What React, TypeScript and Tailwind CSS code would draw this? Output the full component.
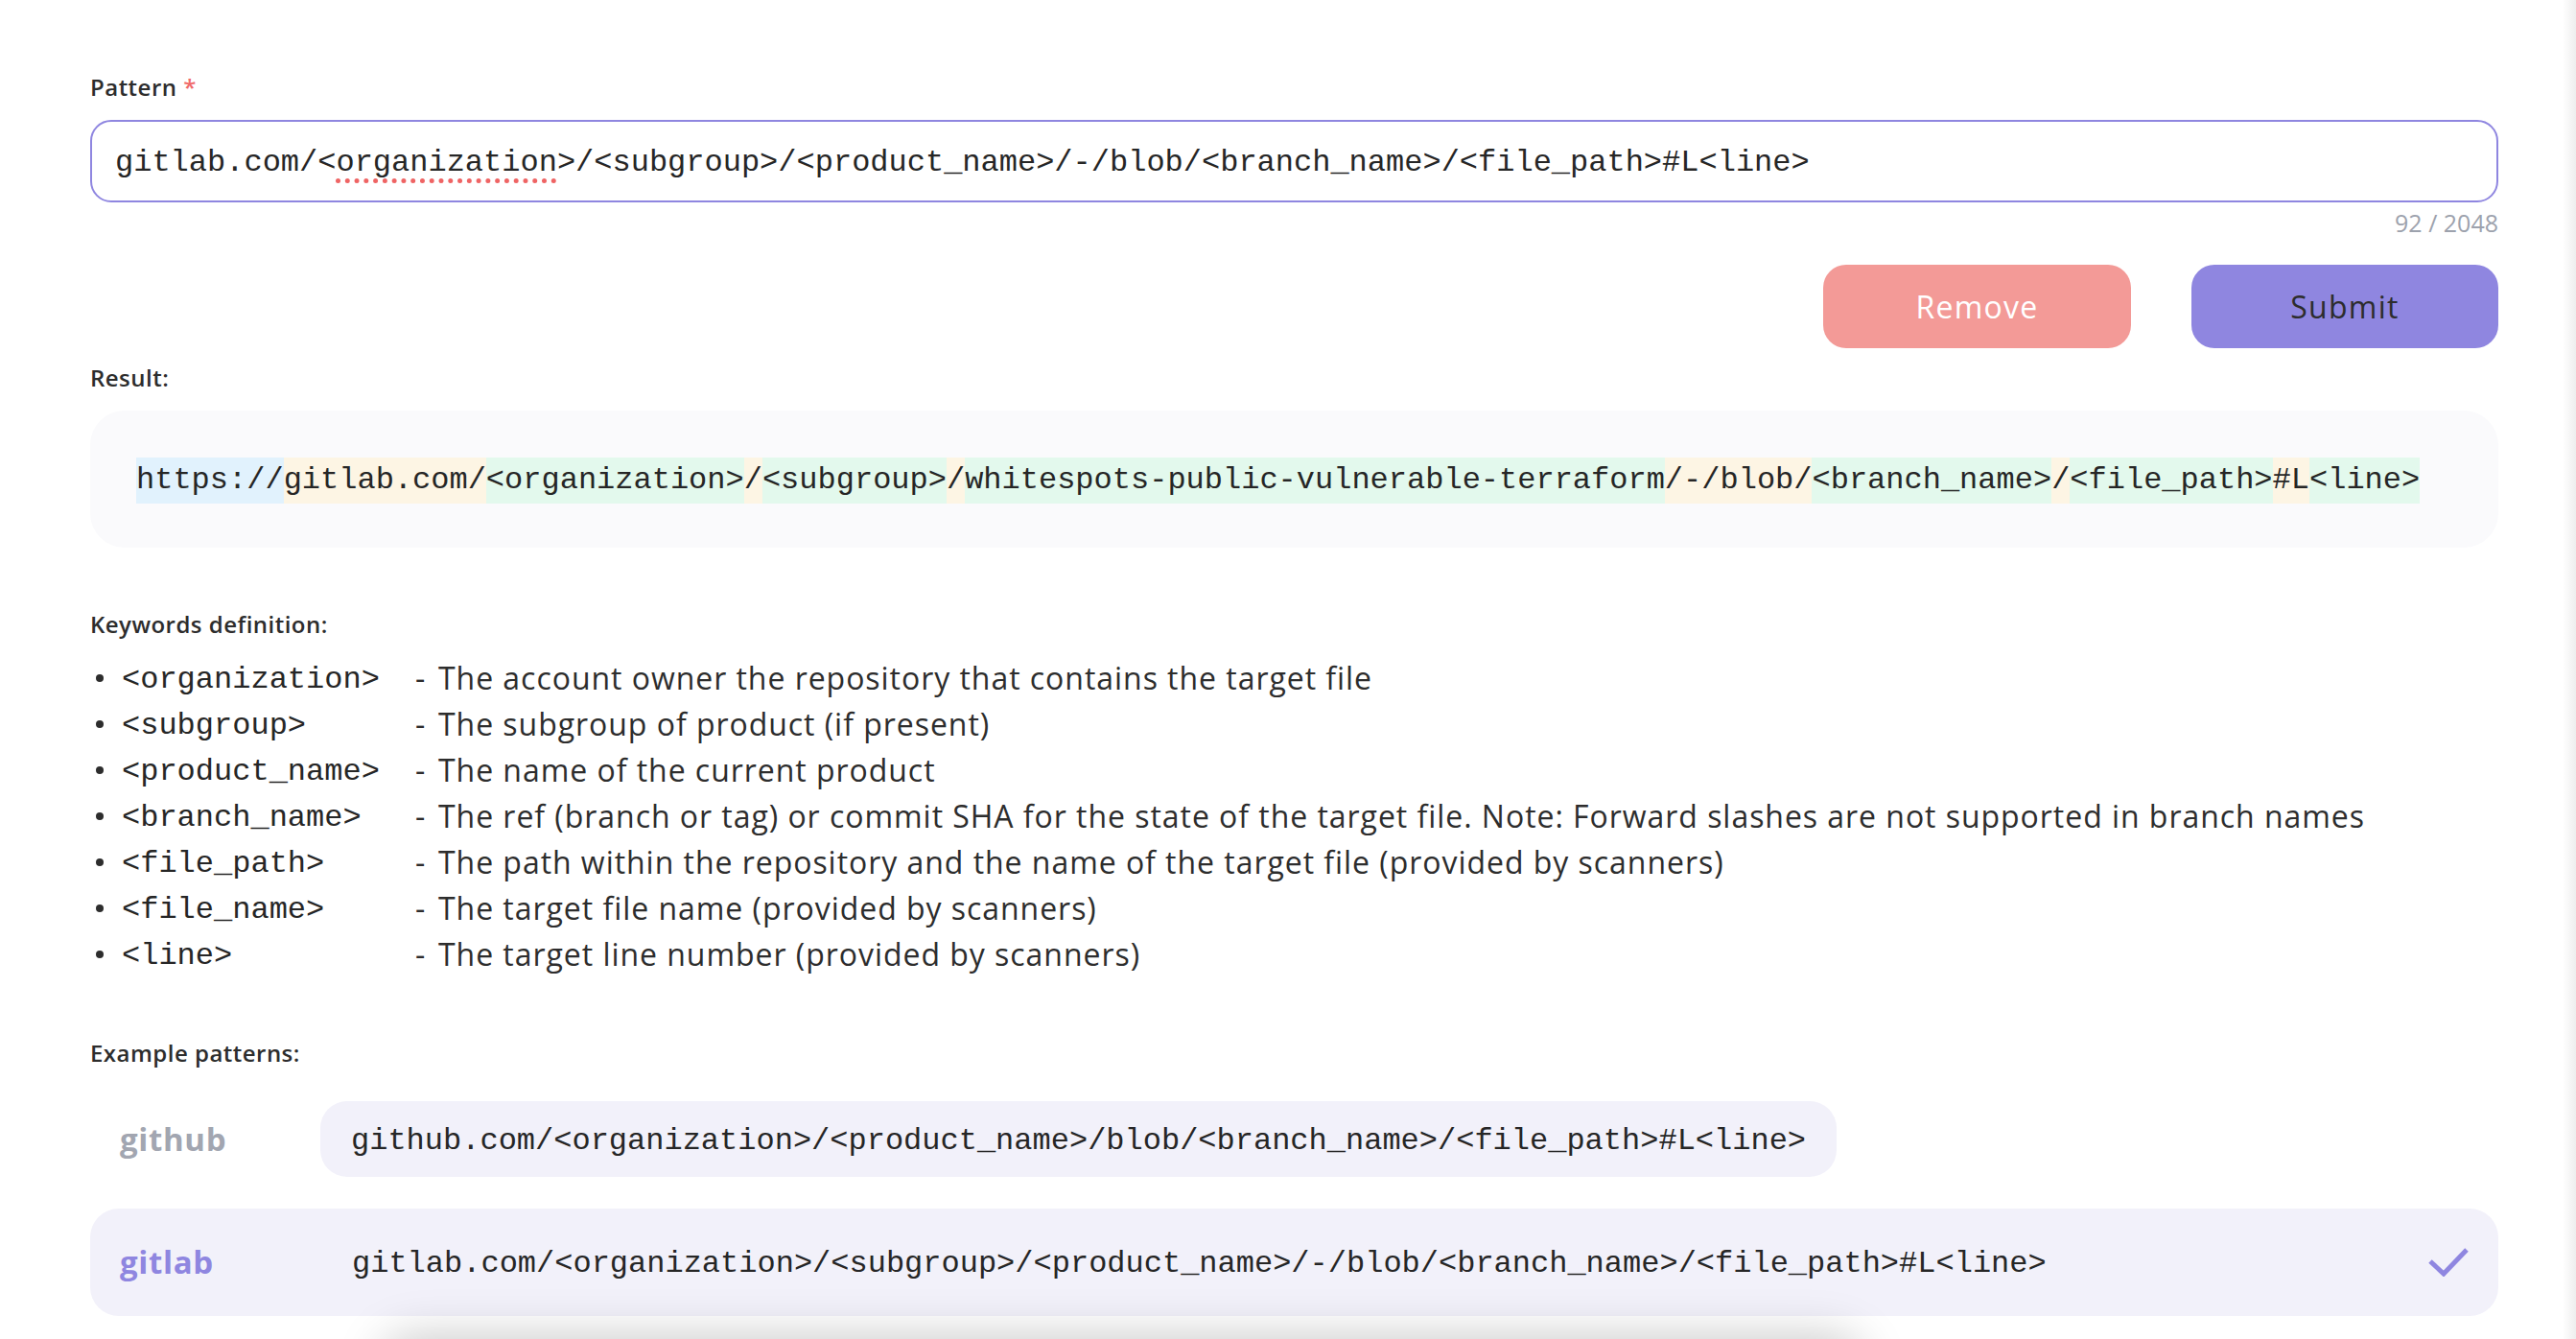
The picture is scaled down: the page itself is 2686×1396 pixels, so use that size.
import React from 'react';

type Seg = { text: string; kind: 'scheme' | 'static' | 'var' };

const resultSegs: Seg[] = [
  { text: 'https://', kind: 'scheme' },
  { text: 'gitlab.com/', kind: 'static' },
  { text: '<organization>', kind: 'var' },
  { text: '/', kind: 'static' },
  { text: '<subgroup>', kind: 'var' },
  { text: '/', kind: 'static' },
  { text: 'whitespots-public-vulnerable-terraform', kind: 'var' },
  { text: '/-/blob/', kind: 'static' },
  { text: '<branch_name>', kind: 'var' },
  { text: '/', kind: 'static' },
  { text: '<file_path>', kind: 'var' },
  { text: '#L', kind: 'static' },
  { text: '<line>', kind: 'var' },
];

const segBg: Record<Seg['kind'], string> = {
  scheme: 'bg-[#e1f2fd]',
  static: 'bg-[#fdf5e4]',
  var: 'bg-[#e3f9ed]',
};

const keywords = [
  ['<organization>', 'The account owner the repository that contains the target file'],
  ['<subgroup>', 'The subgroup of product (if present)'],
  ['<product_name>', 'The name of the current product'],
  ['<branch_name>', 'The ref (branch or tag) or commit SHA for the state of the target file. Note: Forward slashes are not supported in branch names'],
  ['<file_path>', 'The path within the repository and the name of the target file (provided by scanners)'],
  ['<file_name>', 'The target file name (provided by scanners)'],
  ['<line>', 'The target line number (provided by scanners)'],
];

const mono = "font-['Liberation_Mono','DejaVu_Sans_Mono',monospace] text-[#262626]";

function SectionLabel({ children, className = '' }: { children: React.ReactNode; className?: string }) {
  return (
    <div className={`text-[24px] leading-[32px] font-semibold tracking-[0.02em] text-[#2d2d2d] ${className}`}>
      {children}
    </div>
  );
}

export default function App() {
  return (
    <div className="relative h-[1396px] w-full overflow-hidden bg-white flex font-['Open_Sans',sans-serif] text-[#2d2d2d]">
      <main className="flex-1 pl-[94px] pr-[67px] pt-[75px]">
        <SectionLabel>
          Pattern <span className="text-[#f06a6a]">*</span>
        </SectionLabel>
        <div className="mt-[18px] h-[86px] rounded-[22px] border-2 border-[#8f86e0] flex items-center pl-[24px] pt-[4px]">
          <span className={`${mono} text-[32px]`}>
            gitlab.com/&lt;
            <span className="underline decoration-dotted decoration-[#ef6464] decoration-[5px] underline-offset-[8px]">organization</span>
            &gt;/&lt;subgroup&gt;/&lt;product_name&gt;/-/blob/&lt;branch_name&gt;/&lt;file_path&gt;#L&lt;line&gt;
          </span>
        </div>
        <div className="mt-[5px] text-right text-[25px] leading-[32px] text-[#9da2ad]">92 / 2048</div>

        <div className="mt-[28px] flex justify-end gap-[63px]">
          <button className="w-[321px] h-[87px] rounded-[24px] bg-[#f39a97] text-white text-[32px] font-medium tracking-[0.04em]">
            Remove
          </button>
          <button className="w-[320px] h-[87px] rounded-[24px] bg-[#8f86e0] text-[#2d2d2d] text-[32px] font-medium tracking-[0.04em]">
            Submit
          </button>
        </div>

        <SectionLabel className="mt-[15px]">Result:</SectionLabel>
        <div className="mt-[18px] h-[143px] rounded-[36px] bg-[#fafafc] flex items-center pl-[48px] pt-[2px]">
          <div className={`${mono} text-[32px] leading-[48px] flex`}>
            {resultSegs.map((s, i) => (
              <span key={i} className={`whitespace-pre ${segBg[s.kind]}`}>
                {s.text}
              </span>
            ))}
          </div>
        </div>

        <SectionLabel className="mt-[64px]">Keywords definition:</SectionLabel>
        <ul className="mt-[16px]">
          {keywords.map(([term, desc]) => (
            <li key={term} className="flex items-center h-[48px]">
              <span className="w-[33px] flex pl-[6px]">
                <span className="w-[8px] h-[8px] rounded-full bg-[#2d2d2d]" />
              </span>
              <span className={`${mono} text-[32px] w-[306px] shrink-0 pt-[4px]`}>{term}</span>
              <span className="text-[32px] w-[24px] shrink-0">-</span>
              <span className="text-[32px] tracking-[0.03em]">{desc}</span>
            </li>
          ))}
        </ul>

        <SectionLabel className="mt-[63px]">Example patterns:</SectionLabel>
        <div className="mt-[34px] flex items-center">
          <div className="w-[240px] pl-[31px] text-[33px] font-bold tracking-[0.02em] text-[#a2a6b1]">github</div>
          <div className={`h-[79px] rounded-[28px] bg-[#f2f1fa] flex items-center px-[32px] pt-[4px] ${mono} text-[32px]`}>
            github.com/&lt;organization&gt;/&lt;product_name&gt;/blob/&lt;branch_name&gt;/&lt;file_path&gt;#L&lt;line&gt;
          </div>
        </div>
        <div className="mt-[33px] h-[112px] rounded-[30px] bg-[#f2f1fa] flex items-center">
          <div className="w-[240px] shrink-0 pl-[31px] text-[33px] font-bold tracking-[0.02em] text-[#8f86e0]">gitlab</div>
          <div className={`flex-1 pl-[33px] pt-[4px] ${mono} text-[32px]`}>
            gitlab.com/&lt;organization&gt;/&lt;subgroup&gt;/&lt;product_name&gt;/-/blob/&lt;branch_name&gt;/&lt;file_path&gt;#L&lt;line&gt;
          </div>
          <svg className="mr-[31px]" width="42" height="30" viewBox="0 0 42 30" fill="none">
            <polyline points="2,14 16,27 40,2" stroke="#8f86e0" strokeWidth="5" />
          </svg>
        </div>
      </main>
      <div className="w-[14px] bg-gradient-to-r from-white to-[#eeeeee]" />
      {/* shadow of the floating panel just below the fold */}
      <div className="absolute left-[400px] top-[1400px] w-[1540px] h-[80px] rounded-[30px] bg-white shadow-[0_-6px_50px_rgba(0,0,0,0.22)]" />
    </div>
  );
}
